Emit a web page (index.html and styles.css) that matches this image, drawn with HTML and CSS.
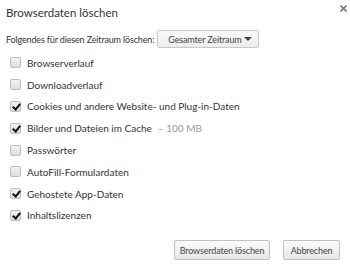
FILE: index.html
```html
<!DOCTYPE html>
<html lang="de">
<head>
    <meta charset="UTF-8">
    <title>Browserdaten löschen</title>
    <link rel="stylesheet" href="styles.css">
</head>
<body>
    <div class="dialog">
        <div class="dialog-header">
            <h1>Browserdaten löschen</h1>
            <span class="close">
                <svg width="7" height="7" viewBox="0 0 7 7"><path d="M0.5 0.5L6.5 6.5M6.5 0.5L0.5 6.5" stroke="#777" stroke-width="1.6"/></svg>
            </span>
        </div>
        <div class="period">
            <span class="small">Folgendes für diesen Zeitraum löschen:</span>
            <div class="select">
                <span class="small">Gesamter Zeitraum</span>
                <span class="arrow"></span>
            </div>
        </div>
        <ul class="options">
            <li><span class="box"></span>Browserverlauf</li>
            <li><span class="box"></span>Downloadverlauf</li>
            <li><span class="box checked"></span>Cookies und andere Website- und Plug-in-Daten</li>
            <li><span class="box checked"></span>Bilder und Dateien im Cache<span class="size">&ndash; 100 MB</span></li>
            <li><span class="box"></span>Passwörter</li>
            <li><span class="box"></span>AutoFill-Formulardaten</li>
            <li><span class="box checked"></span>Gehostete App-Daten</li>
            <li><span class="box checked"></span>Inhaltslizenzen</li>
        </ul>
        <div class="buttons">
            <button class="btn-clear">Browserdaten löschen</button>
            <button class="btn-cancel">Abbrechen</button>
        </div>
    </div>
</body>
</html>
```

FILE: styles.css
```css
body {
    margin: 0;
    background: #fff;
    font-family: 'Lato', sans-serif;
    font-size: 10px;
    color: #333;
    white-space: nowrap;
}
.small {
    font-size: 9px;
    letter-spacing: -0.15px;
}
.dialog {
    width: 350px;
    height: 269px;
    box-sizing: border-box;
    padding: 0 7px 0 6px;
}
.dialog-header {
    display: flex;
    justify-content: space-between;
    align-items: flex-start;
    height: 30px;
}
h1 {
    margin: 6px 0 0;
    font-size: 11.5px;
    font-weight: normal;
    color: #333;
}
.close {
    margin-top: 2px;
    margin-right: -4px;
}
.period {
    display: flex;
    align-items: center;
    gap: 3px;
    height: 18px;
}
.select {
    display: flex;
    align-items: center;
    justify-content: space-between;
    width: 102px;
    height: 18px;
    box-sizing: border-box;
    padding: 0 6px 0 10px;
    border: 1px solid #c8c8c8;
    border-radius: 2px;
    background: linear-gradient(#fafafa, #ececec);
    color: #444;
}
.arrow {
    width: 0;
    height: 0;
    border-left: 4px solid transparent;
    border-right: 4px solid transparent;
    border-top: 4px solid #444;
}
.options {
    list-style: none;
    margin: 4px 0 0;
    padding: 0 0 0 4px;
}
.options li {
    display: flex;
    align-items: center;
    height: 21.8px;
}
.box {
    width: 11px;
    height: 11px;
    box-sizing: border-box;
    margin-right: 6px;
    border: 1px solid #bdbdbd;
    border-radius: 2px;
    background: linear-gradient(#f2f2f2, #dedede);
    position: relative;
}
.box.checked::after {
    content: '';
    position: absolute;
    left: 3px;
    top: 0;
    width: 3px;
    height: 6px;
    border-right: 2px solid #111;
    border-bottom: 2px solid #111;
    transform: rotate(40deg);
}
.size {
    margin-left: 6px;
    color: #999;
}
.buttons {
    display: flex;
    justify-content: flex-end;
    gap: 13px;
    margin-top: 14px;
    padding-right: 3px;
}
button {
    font-family: inherit;
    font-size: 9px;
    letter-spacing: -0.15px;
    color: #444;
    height: 20px;
    padding: 0;
    border: 1px solid #c0c0c0;
    border-radius: 2px;
    background: linear-gradient(#fafafa, #e8e8e8);
}
.btn-clear {
    width: 96px;
}
.btn-cancel {
    width: 57px;
}
```
